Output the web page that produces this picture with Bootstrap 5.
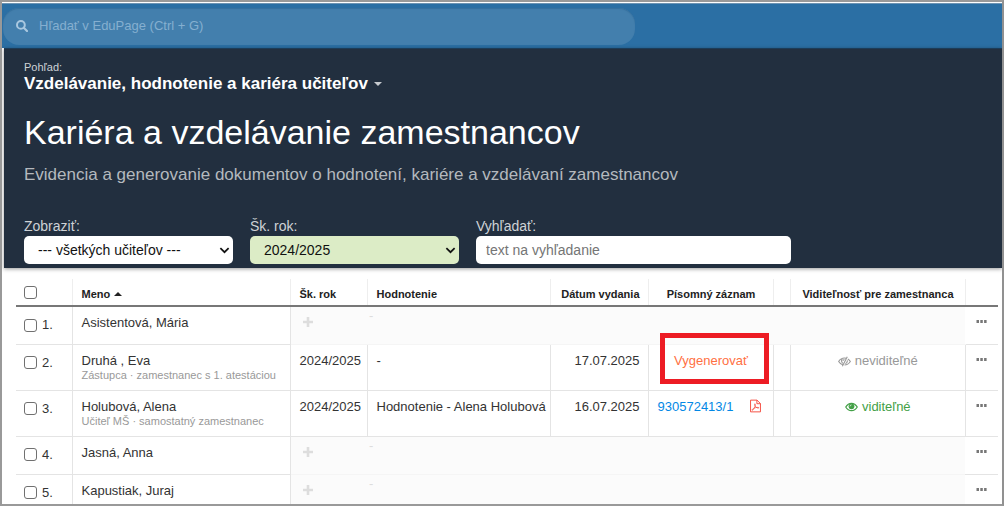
<!DOCTYPE html>
<html lang="sk">
<head>
<meta charset="utf-8">
<meta name="viewport" content="width=device-width, initial-scale=1">
<title>Kariéra a vzdelávanie zamestnancov</title>
<link href="https://cdn.jsdelivr.net/npm/bootstrap@5.3.0/dist/css/bootstrap.min.css" rel="stylesheet">
<style>
  body { font-family: "Liberation Sans", Arial, sans-serif; font-size: 13px; line-height: 16px; color: #333; background: #fff; }
  .app-frame { border: 2px solid #999; border-right-color: #919191; }
  .topbar { background: #2b6fa4; margin-top: 1px; padding: 4px 2px 3px 1px; border-top: 1px solid #6d94b3; }
  .search-pill { max-width: 632px; height: 37px; background: #437fad; border-radius: 16px; padding: 0 13px 2px; gap: 11px; box-shadow: inset 0 1px 1px #37719e; }
  .search-pill input { font-size: 13px; line-height: 16px; color: #fff; }
  .search-pill input::placeholder { color: #85afd0; opacity: 1; }
  .hero { background: #222f3f; margin-left: 2px; padding: 12px 20px 4px; color: #ced2d6; border-top: 1px solid #1c3c58; box-shadow: 0 1px 4px rgba(0,0,0,.4); }
  .view-label { font-size: 11px; line-height: 13px; }
  .view-switch { font-size: 17px; line-height: 20px; color: #fff; gap: 6px; }
  .view-caret { border: 4px solid transparent; border-top-color: #c6cacf; border-bottom: 0; }
  .hero h1 { font-size: 34px; line-height: 40px; color: #fff; margin: 18px 0 0; }
  .hero-sub { font-size: 17px; line-height: 20px; margin: 13px 0 33px; color: #b4b9be; }
  .filters { gap: 17px; font-size: 14px; }
  .filters label { line-height: 16px; margin-bottom: 2px; }
  .filter-select { flex: 0 1 209px; }
  .filter-text { flex: 0 1 315px; }
  .filters .form-select, .filters .form-control { height: 28px; border: 0; border-radius: 5px; font-size: 14px; line-height: 20px; padding: 4px 24px 4px 14px; color: #111; }
  .filters .form-select { background-image: url("data:image/svg+xml,%3csvg xmlns='http://www.w3.org/2000/svg' viewBox='0 0 16 16'%3e%3cpath fill='none' stroke='%23111' stroke-width='2.500' d='M2 4.500l6 6 6-6'/%3e%3c/svg%3e"); background-size: 11px 11px; background-position: right 3px center; }
  .filters .form-control { padding-left: 10px; }
  .filters .form-control::placeholder { color: #757575; }
  .filters .year-select { background-color: #dcecc6; }
  .table-area { padding: 11px 4px 0 14px; }
  .staff { table-layout: fixed; width: 100%; }
  .staff th, .staff td { padding: 8px 8px 5px 9px; border-right: 1px solid #e4e4e4; border-bottom: 1px solid #e4e4e4; vertical-align: top; white-space: nowrap; }
  .staff th { height: 26px; padding-top: 9px; padding-bottom: 4px; border-right-color: #eee; border-bottom: 2px solid #777; font-size: 11px; line-height: 13px; color: #222; }
  .staff tr > :last-child { border-right: 0; padding: 6px 0; }
  .staff td { height: 38px; }
  .staff .tall td { height: 46px; }
  .staff .pick { padding: 10px 0 0 8px; }
  .staff th.pick { padding-top: 7px; }
  .staff .pick label { gap: 5px; }
  .staff .form-check-input { width: 13px; height: 13px; margin: 0; border: 1px solid #707070; border-radius: 3px; flex: none; }
  .staff .blank { background: #fbfbfb; border-right: 0; border-bottom-color: #f5f5f5; color: #ddd; padding-top: 6px; padding-right: 0; }
  .staff .blank-dash { line-height: 8px; padding: 5px 0 0 2px; }
  .role { font-size: 11px; line-height: 13px; color: #999; }
  .sort-up { border: 4px solid transparent; border-bottom-color: #222; border-top: 0; margin: 0 0 2px 4px; }
  .icon-btn { border: 0; background: none; padding: 0; line-height: 0; }
  .icon-add { padding: 4px 3px 0; }
  .link-gen { color: #ff7043; }
  .link-rec { color: #0288e5; }
  .seen { color: #43a047; }
  .unseen { color: #999; }
  .marked { position: relative; }
  .marked::after { content: ""; position: absolute; inset: -12px 4px 6px 11px; border: 5px solid #ed1c24; pointer-events: none; }
</style>
</head>
<body>
<svg class="d-none" aria-hidden="true">
  <symbol id="plus" viewBox="0 0 10 10"><path fill="#ddd" d="M3.700 0h2.600v3.700H10v2.600H6.300V10H3.700V6.300H0V3.700h3.700z"/></symbol>
  <symbol id="dots" viewBox="0 0 11 3"><path fill="#777" d="M.5 0h2.500v3H.5zM4.300 0h2.500v3H4.300zM8.100 0h2.500v3H8.100z"/></symbol>
  <symbol id="search" viewBox="0 0 12 12"><circle cx="4.900" cy="4.900" r="3.900" fill="none" stroke="currentColor" stroke-width="2"/><path d="M7.700 7.700l3.300 3.300" stroke="currentColor" stroke-width="2.200" stroke-linecap="round"/></symbol>
  <symbol id="eye" viewBox="0 0 14 10"><path fill="none" stroke="currentColor" stroke-width="1.300" d="M.8 5Q3.200 1 7 1t6.200 4Q10.800 9 7 9T.8 5z"/><circle cx="7" cy="4.300" r="3.100" fill="currentColor"/><path fill="none" stroke="#fff" stroke-width=".8" d="M5.400 4.300Q5.500 2.800 7 2.700"/></symbol>
  <symbol id="eye-off" viewBox="0 0 14 11"><path fill="none" stroke="currentColor" stroke-width="1.200" d="M5 8.900C3.200 8.300 1.600 7 .7 5.500 2.200 3.200 4.500 1.800 7 1.800q.8 0 1.700.2M10.600 2.700q1.700 1 2.700 2.800C11.800 7.800 9.600 9.200 7 9.200M4.600 2.600C3.200 4.600 3.900 6.600 5.300 7.500M10 4.300C10.300 6 9.300 7.300 8 7.900M5.300 4.700Q5.700 3.500 7 3.400M10 .4L4.700 10.600"/></symbol>
  <symbol id="pdf" viewBox="0 0 12 14"><path fill="none" stroke="currentColor" d="M.6.600h7l3.800 3.700v9.100H.6zM7.500.6v3.900h3.900"/><path fill="none" stroke="currentColor" stroke-width=".8" d="M5.300 4.600c.9 0 .3 2.600-.4 4.100-.6 1.500-1.700 3-2.400 3-.8-.3.500-1.900 2.200-2.500 1.800-.7 4.900-1.100 5-.2-.2.900-2.600-.1-3.500-1.200C5.300 6.900 4.700 5.100 5.300 4.600z"/></symbol>
</svg>
<div class="app-frame vh-100 overflow-hidden">
  <header class="topbar">
    <form class="search-pill d-flex align-items-center" role="search">
      <svg width="12" height="12" color="#a9c8e0" aria-hidden="true"><use href="#search"/></svg>
      <input class="border-0 bg-transparent p-0 flex-grow-1" type="search" aria-label="Hľadať" placeholder="Hľadať v EduPage (Ctrl + G)">
    </form>
  </header>
  <section class="hero">
    <div class="view-label">Pohľad:</div>
    <button type="button" class="view-switch btn p-0 border-0 fw-bold d-flex align-items-center">Vzdelávanie, hodnotenie a kariéra učiteľov <span class="view-caret"></span></button>
    <h1 class="fw-normal">Kariéra a vzdelávanie zamestnancov</h1>
    <p class="hero-sub">Evidencia a generovanie dokumentov o hodnotení, kariére a vzdelávaní zamestnancov</p>
    <form class="filters d-flex">
      <div class="filter-select">
        <label class="d-block" for="show">Zobraziť:</label>
        <select id="show" class="form-select"><option>--- všetkých učiteľov ---</option></select>
      </div>
      <div class="filter-select">
        <label class="d-block" for="year">Šk. rok:</label>
        <select id="year" class="form-select year-select"><option>2024/2025</option></select>
      </div>
      <div class="filter-text">
        <label class="d-block" for="find">Vyhľadať:</label>
        <input id="find" class="form-control" type="text" placeholder="text na vyhľadanie">
      </div>
    </form>
  </section>
  <main class="table-area">
    <table class="staff">
      <colgroup><col width="56"><col><col width="77"><col width="183"><col width="98"><col width="125"><col width="17"><col width="175"><col width="33"></colgroup>
      <thead>
        <tr>
          <th class="pick"><input class="form-check-input d-block" type="checkbox" aria-label="Vybrať všetko"></th>
          <th>Meno<span class="sort-up d-inline-block"></span></th>
          <th>Šk. rok</th>
          <th>Hodnotenie</th>
          <th class="text-end">Dátum vydania</th>
          <th class="text-center">Písomný záznam</th>
          <th></th>
          <th class="text-center">Viditeľnosť pre zamestnanca</th>
          <th></th>
        </tr>
      </thead>
      <tbody>
        <tr>
          <td class="pick"><label class="d-flex align-items-center"><input class="form-check-input" type="checkbox">1.</label></td>
          <td>Asistentová, Mária</td>
          <td class="blank"><button type="button" class="icon-btn icon-add" aria-label="Pridať"><svg width="10" height="10"><use href="#plus"/></svg></button></td>
          <td class="blank blank-dash" colspan="5">-</td>
          <td class="text-center"><button type="button" class="icon-btn" aria-label="Viac"><svg width="11" height="3"><use href="#dots"/></svg></button></td>
        </tr>
        <tr class="tall">
          <td class="pick"><label class="d-flex align-items-center"><input class="form-check-input" type="checkbox">2.</label></td>
          <td>Druhá , Eva<div class="role">Zástupca · zamestnanec s 1. atestáciou</div></td>
          <td>2024/2025</td>
          <td>-</td>
          <td class="text-end">17.07.2025</td>
          <td class="text-center marked"><a class="link-gen text-decoration-none" href="#">Vygenerovať</a></td>
          <td></td>
          <td class="text-center unseen"><svg width="13" height="11"><use href="#eye-off"/></svg> neviditeľné</td>
          <td class="text-center"><button type="button" class="icon-btn" aria-label="Viac"><svg width="11" height="3"><use href="#dots"/></svg></button></td>
        </tr>
        <tr class="tall">
          <td class="pick"><label class="d-flex align-items-center"><input class="form-check-input" type="checkbox">3.</label></td>
          <td>Holubová, Alena<div class="role">Učiteľ MŠ · samostatný zamestnanec</div></td>
          <td>2024/2025</td>
          <td>Hodnotenie - Alena Holubová</td>
          <td class="text-end">16.07.2025</td>
          <td><div class="d-flex justify-content-between"><a class="link-rec text-decoration-none" href="#">930572413/1</a><a class="lh-1 pe-1" href="#" aria-label="PDF"><svg class="d-block" width="11" height="14" color="#f44336"><use href="#pdf"/></svg></a></div></td>
          <td></td>
          <td class="text-center seen"><svg width="13" height="10"><use href="#eye"/></svg> viditeľné</td>
          <td class="text-center"><button type="button" class="icon-btn" aria-label="Viac"><svg width="11" height="3"><use href="#dots"/></svg></button></td>
        </tr>
        <tr>
          <td class="pick"><label class="d-flex align-items-center"><input class="form-check-input" type="checkbox">4.</label></td>
          <td>Jasná, Anna</td>
          <td class="blank"><button type="button" class="icon-btn icon-add" aria-label="Pridať"><svg width="10" height="10"><use href="#plus"/></svg></button></td>
          <td class="blank blank-dash" colspan="5">-</td>
          <td class="text-center"><button type="button" class="icon-btn" aria-label="Viac"><svg width="11" height="3"><use href="#dots"/></svg></button></td>
        </tr>
        <tr>
          <td class="pick"><label class="d-flex align-items-center"><input class="form-check-input" type="checkbox">5.</label></td>
          <td>Kapustiak, Juraj</td>
          <td class="blank"><button type="button" class="icon-btn icon-add" aria-label="Pridať"><svg width="10" height="10"><use href="#plus"/></svg></button></td>
          <td class="blank blank-dash" colspan="5">-</td>
          <td class="text-center"><button type="button" class="icon-btn" aria-label="Viac"><svg width="11" height="3"><use href="#dots"/></svg></button></td>
        </tr>
      </tbody>
    </table>
  </main>
</div>
<script src="https://cdn.jsdelivr.net/npm/bootstrap@5.3.0/dist/js/bootstrap.bundle.min.js"></script>
</body>
</html>
